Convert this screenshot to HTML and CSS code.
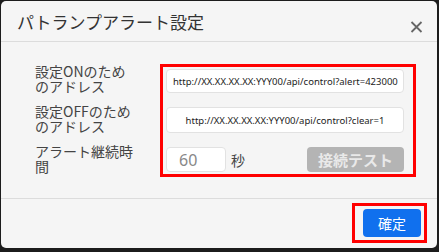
FILE: index.html
```html
<!DOCTYPE html>
<html lang="ja">
<head>
    <meta charset="UTF-8">
    <meta name="viewport" content="width=device-width, initial-scale=1.0">
    <title>パトランプアラート設定</title>
    <link rel="stylesheet" href="styles.css">
</head>
<body>
    <div class="dialog">
        <div class="dialog-header">
            <h2>パトランプアラート設定</h2>
            <button class="close" aria-label="閉じる">
                <svg width="13" height="12" viewBox="0 0 13 12">
                    <path d="M1.5 1 L11.5 11 M11.5 1 L1.5 11" stroke="#666" stroke-width="1.8" fill="none"/>
                </svg>
            </button>
        </div>

        <div class="dialog-body">
            <div class="labels">
                <label>設定ONのためのアドレス</label>
                <label>設定OFFのためのアドレス</label>
                <label>アラート継続時間</label>
            </div>
            <!-- 赤枠: 入力エリア -->
            <div class="fields highlight">
                <div class="field url-on">http://XX.XX.XX.XX:YYY00/api/control?alert=423000</div>
                <div class="field url-off">http://XX.XX.XX.XX:YYY00/api/control?clear=1</div>
                <div class="row">
                    <div class="field seconds">60</div>
                    <span class="unit">秒</span>
                    <button class="test-btn">接続テスト</button>
                </div>
            </div>
        </div>

        <div class="dialog-footer">
            <div class="highlight confirm-wrap">
                <button class="confirm">確定</button>
            </div>
        </div>
    </div>
</body>
</html>
```

FILE: styles.css
```css
/* Stile della pagina */
body {
    margin: 0;
    padding: 1px 2px 4px 1px;
    background-color: #1c1c1c;
    font-family: "Noto Sans CJK JP", sans-serif;
    color: #333;
}

.dialog {
    background-color: #f5f5f5;
    border-radius: 5px;
    height: 247px;
    display: flex;
    flex-direction: column;
}

.dialog-header {
    height: 40px;
    border-bottom: 1px solid #dcdcdc;
    display: flex;
    justify-content: space-between;
    align-items: flex-start;
    padding: 0 14px 0 16px;
}

.dialog-header h2 {
    margin: 11px 0 0;
    font-size: 17px;
    line-height: 20px;
    font-weight: 400;
    color: #333;
}

.close {
    margin-top: 20px;
    padding: 0;
    border: none;
    background: none;
    width: 13px;
    height: 12px;
    display: flex;
}

.dialog-body {
    display: flex;
    padding: 22px 0 21px 34px;
    border-bottom: 1px solid #dcdcdc;
}

.labels {
    width: 100px;
    margin-right: 25px;
    display: flex;
    flex-direction: column;
    gap: 10px;
}

.labels label {
    height: 30px;
    font-size: 14px;
    line-height: 15px;
    color: #444;
}

.highlight {
    border: 3px solid #f00;
}

.fields {
    width: 238px;
    padding: 2px 9px 0 3px;
    height: 105px;
    display: flex;
    flex-direction: column;
    gap: 14px;
}

.field {
    background-color: #fff;
    border: 1px solid #e2e2e2;
    border-radius: 4px;
    box-sizing: border-box;
    font-family: "Noto Sans", sans-serif;
    font-size: 9.5px;
    color: #222;
    white-space: nowrap;
    overflow: hidden;
    display: flex;
    align-items: center;
}

.url-on {
    height: 24px;
    padding-left: 6px;
}

.url-off {
    height: 26px;
    justify-content: center;
}

.row {
    display: flex;
    align-items: center;
    height: 25px;
}

.seconds {
    width: 60px;
    height: 25px;
    padding-left: 12px;
    font-size: 16px;
    color: #888;
}

.unit {
    margin-left: 5px;
    font-size: 14px;
    color: #444;
}

.test-btn {
    margin-left: auto;
    width: 97px;
    height: 25px;
    border: none;
    border-radius: 4px;
    background-color: #b4b4b4;
    color: #e9e9e9;
    font-family: "Noto Sans CJK JP", sans-serif;
    font-size: 15px;
    font-weight: 700;
    padding: 0;
}

.dialog-footer {
    flex: 1;
    display: flex;
    justify-content: flex-end;
    align-items: flex-start;
    padding: 4px 10px 0 0;
}

.confirm-wrap {
    padding: 3px 3px 3px 8px;
    display: flex;
}

.confirm {
    width: 58px;
    height: 28px;
    border: none;
    border-radius: 4px;
    background-color: #1070ee;
    color: #fff;
    font-family: "Noto Sans CJK JP", sans-serif;
    font-size: 14px;
    padding: 0;
}
```
